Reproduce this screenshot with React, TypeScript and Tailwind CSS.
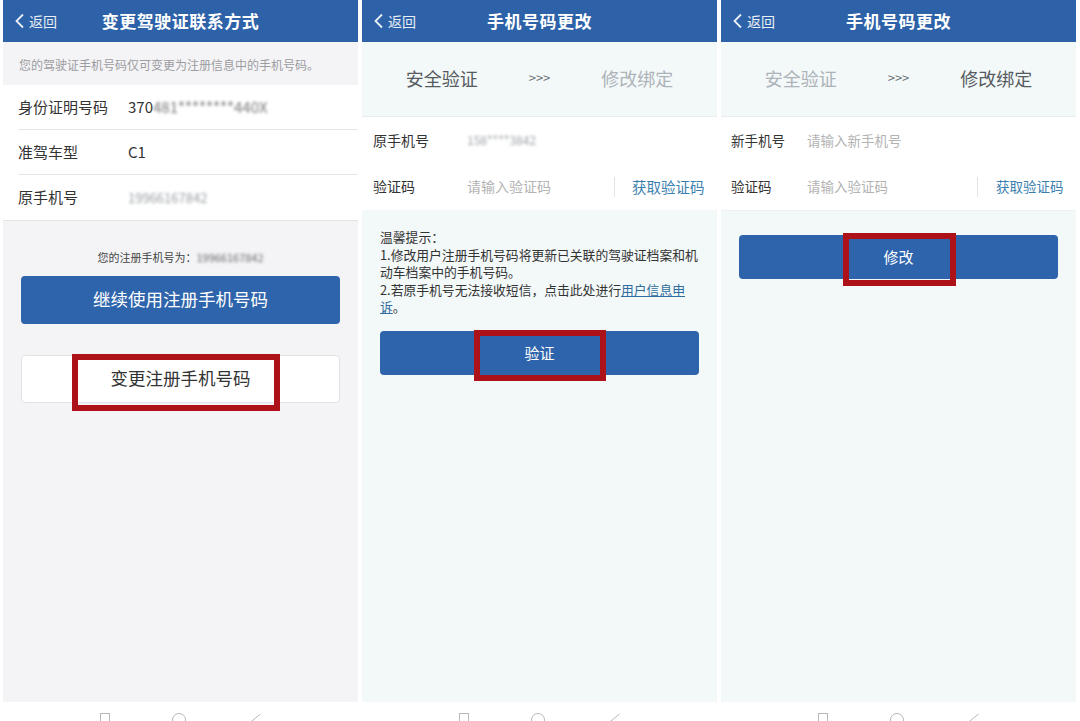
import React from "react";

const FONT = { fontFamily: '"Noto Sans CJK SC", "Noto Sans", sans-serif' };

const Header = ({ title }: { title: string }) => (
  <div className="relative flex h-[42px] shrink-0 items-center justify-center bg-[#2d62a8] text-white">
    <div className="absolute left-[11px] top-0 flex h-full items-center gap-[3px] text-[14px] text-white/90">
      <svg width="12" height="16" viewBox="0 0 12 16" fill="none" stroke="currentColor" strokeWidth="1.8">
        <path d="M9 1.5 L2.5 8 L9 14.5" />
      </svg>
      <span>返回</span>
    </div>
    <span className="text-[17px] font-bold tracking-[0.5px]">{title}</span>
  </div>
);

const NavBar = () => (
  <div className="relative h-[19px] shrink-0 overflow-hidden bg-white">
    <div className="flex justify-center gap-[62px] pt-[11px]">
      <div className="h-[12px] w-[10px] border border-[#b8b8b8]" />
      <div className="h-[14px] w-[14px] rounded-full border border-[#b8b8b8]" />
      <svg width="14" height="14" viewBox="0 0 14 14" fill="none" stroke="#b8b8b8" strokeWidth="1">
        <path d="M12.5 1 L1.5 10 L12.5 13" />
      </svg>
    </div>
  </div>
);

const Blur = ({ children, className = "" }: { children: React.ReactNode; className?: string }) => (
  <span className={"blur-[1.4px] text-[#9aa0a6] " + className}>{children}</span>
);

const Highlight = ({ className }: { className: string }) => (
  <div className={"pointer-events-none absolute border-[6px] border-[#ad1218] " + className} />
);

const Steps = ({ active }: { active: 0 | 1 }) => (
  <div className="flex h-[74px] shrink-0 items-center justify-center gap-[51px] pb-[2px] text-[18px]">
    <span className={active === 0 ? "text-[#555b61]" : "text-[#adb3b8]"}>安全验证</span>
    <span className="text-[13px] text-[#6b7177]">&gt;&gt;&gt;</span>
    <span className={active === 1 ? "text-[#555b61]" : "text-[#adb3b8]"}>修改绑定</span>
  </div>
);

const PanelOne = () => (
  <div className="flex h-full w-[355px] flex-col bg-[#f4f4f7]">
    <Header title="变更驾驶证联系方式" />
    <div className="flex h-[43px] items-center pl-[16px] pt-[3px] text-[12px] text-[#9c9c9f]">
      您的驾驶证手机号码仅可变更为注册信息中的手机号码。
    </div>
    <div className="bg-white pl-[15px] text-[15px] text-[#333]">
      <div className="flex h-[45px] items-center border-b border-[#e6e6e6]">
        <span className="w-[110px]">身份证明号码</span>
        <span>
          370<Blur className="text-[#777]">481********440X</Blur>
        </span>
      </div>
      <div className="flex h-[45px] items-center border-b border-[#e6e6e6]">
        <span className="w-[110px]">准驾车型</span>
        <span>C1</span>
      </div>
      <div className="flex h-[45px] items-center">
        <span className="w-[110px]">原手机号</span>
        <Blur className="text-[13px]">19966167842</Blur>
      </div>
    </div>
    <div className="border-t border-[#e4e4e6] px-[18px] pt-[28px]">
      <div className="text-center text-[11px] text-[#444]">
        您的注册手机号为：<Blur className="text-[#666]">19966167842</Blur>
      </div>
      <div className="mt-[10px] flex h-[48px] items-center justify-center rounded-[4px] bg-[#2e64ab] text-[17.5px] text-white">
        继续使用注册手机号码
      </div>
      <div className="relative mt-[31px] flex h-[48px] items-center justify-center rounded-[4px] border border-[#e2e2e4] bg-white text-[17.5px] text-[#333]">
        变更注册手机号码
        <Highlight className="left-[50px] top-[-2px] h-[57px] w-[208px]" />
      </div>
    </div>
    <div className="flex-1" />
    <NavBar />
  </div>
);

const PanelTwo = () => (
  <div className="flex h-full w-[355px] flex-col bg-[#f3f8f9]">
    <Header title="手机号码更改" />
    <Steps active={0} />
    <div className="border-t border-[#e8eef0] bg-white text-[14px] text-[#333]">
      <div className="flex h-[46px] items-center pl-[11px]">
        <span className="w-[94px]">原手机号</span>
        <Blur className="text-[12px]">158****3842</Blur>
      </div>
      <div className="flex h-[47px] items-center pl-[11px]">
        <span className="w-[94px]">验证码</span>
        <span className="w-[147px] text-[#b3b3b3]">请输入验证码</span>
        <div className="h-[20px] w-px bg-[#e4e4e4]" />
        <span className="ml-[17px] text-[14.5px] text-[#3b7fae]">获取验证码</span>
      </div>
    </div>
    <div className="px-[18px] pt-[18px] text-[12.8px] leading-[17.5px] text-[#333]">
      <div className="whitespace-nowrap">温馨提示：</div>
      <div className="whitespace-nowrap">1.修改用户注册手机号码将更新已关联的驾驶证档案和机</div>
      <div className="whitespace-nowrap">动车档案中的手机号码。</div>
      <div className="whitespace-nowrap">
        2.若原手机号无法接收短信，点击此处进行<span className="text-[#2f6d9e] underline">用户信息申</span>
      </div>
      <div className="whitespace-nowrap">
        <span className="text-[#2f6d9e] underline">诉</span>。
      </div>
      <div className="relative mt-[15px] flex h-[44px] items-center justify-center rounded-[4px] bg-[#2e64ab] text-[15px] text-white">
        验证
        <Highlight className="left-[94px] top-[-1px] h-[51px] w-[132px]" />
      </div>
    </div>
    <div className="flex-1" />
    <NavBar />
  </div>
);

const PanelThree = () => (
  <div className="flex h-full w-[355px] flex-col bg-[#f3f8f9]">
    <Header title="手机号码更改" />
    <Steps active={1} />
    <div className="border-t border-[#e8eef0] bg-white text-[13.5px] text-[#333]">
      <div className="flex h-[46px] items-center pl-[10px]">
        <span className="w-[76px]">新手机号</span>
        <span className="text-[#b3b3b3]">请输入新手机号</span>
      </div>
      <div className="flex h-[47px] items-center pl-[10px]">
        <span className="w-[76px]">验证码</span>
        <span className="w-[170px] text-[#b3b3b3]">请输入验证码</span>
        <div className="h-[20px] w-px bg-[#e4e4e4]" />
        <span className="ml-[18px] text-[#3b7fae]">获取验证码</span>
      </div>
    </div>
    <div className="border-t border-[#eef2f3] px-[18px] pt-[24px]">
      <div className="relative flex h-[44px] items-center justify-center rounded-[4px] bg-[#2e64ab] text-[15px] text-white">
        修改
        <Highlight className="left-[104px] top-[-2px] h-[53px] w-[113px]" />
      </div>
    </div>
    <div className="flex-1" />
    <NavBar />
  </div>
);

export default function App() {
  return (
    <div className="flex h-[721px] w-[1080px] gap-[4px] overflow-hidden bg-white pl-[3px]" style={FONT}>
      <PanelOne />
      <PanelTwo />
      <PanelThree />
    </div>
  );
}
